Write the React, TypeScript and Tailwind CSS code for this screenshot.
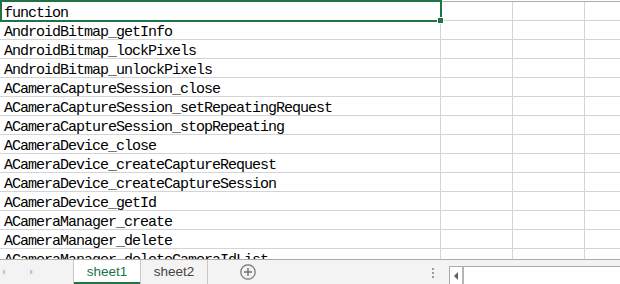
const rows = [
  'function',
  'AndroidBitmap_getInfo',
  'AndroidBitmap_lockPixels',
  'AndroidBitmap_unlockPixels',
  'ACameraCaptureSession_close',
  'ACameraCaptureSession_setRepeatingRequest',
  'ACameraCaptureSession_stopRepeating',
  'ACameraDevice_close',
  'ACameraDevice_createCaptureRequest',
  'ACameraDevice_createCaptureSession',
  'ACameraDevice_getId',
  'ACameraManager_create',
  'ACameraManager_delete',
  'ACameraManager_deleteCameraIdList',
];

function PlusIcon() {
  return (
    <svg width="16" height="16" viewBox="0 0 16 16" fill="none">
      <circle cx="8" cy="8" r="7.2" stroke="#707070" strokeWidth="1.2" />
      <path d="M8 4v8M4 8h8" stroke="#707070" strokeWidth="1.4" />
    </svg>
  );
}

export default function App() {
  return (
    <div className="relative w-[620px] h-[284px] overflow-hidden bg-white flex flex-col">
      {/* grid */}
      <div className="relative h-[259px] overflow-hidden shrink-0">
        <div className="h-px bg-white"></div>
        <div className="h-px bg-[#ababab]"></div>
        {rows.map((r) => (
          <div key={r} className="flex h-[19px] border-b border-[#d4d4d4]">
            <div className="w-[441px] shrink-0 border-r border-[#d4d4d4] pl-[4px] pt-[5px] whitespace-nowrap">
              <span className="block text-black text-[15px] leading-[13px] tracking-[-1px] font-['Liberation_Mono',monospace]">
                {r}
              </span>
            </div>
            <div className="w-[72px] shrink-0 border-r border-[#d4d4d4]"></div>
            <div className="w-[72px] shrink-0 border-r border-[#d4d4d4]"></div>
            <div className="w-[72px] shrink-0 border-r border-[#d4d4d4]"></div>
          </div>
        ))}
        {/* selection */}
        <div className="absolute left-0 top-0 w-[442px] h-[22px] border-2 border-[#217346]"></div>
        <div className="absolute left-[437px] top-[17px] w-[7px] h-[7px] bg-[#217346] border border-white"></div>
      </div>

      {/* sheet tabs bar */}
      <div className="flex h-[25px] shrink-0 border-t border-[#ababab] bg-[#f3f3f3] font-['Liberation_Sans',Arial,sans-serif]">
        <div className="w-[73px] shrink-0 flex items-center">
          <div className="ml-[2px] w-0 h-0 border-y-[3px] border-y-transparent border-r-[3px] border-r-[#c4c4c4]"></div>
          <div className="ml-[25px] w-0 h-0 border-y-[3px] border-y-transparent border-l-[3px] border-l-[#c4c4c4]"></div>
        </div>
        <div className="w-[68px] shrink-0 bg-white border-x border-[#c8c8c8] flex flex-col">
          <div className="flex-1 flex items-center justify-center pt-[1px] text-[13.5px] leading-[16px] text-[#217346]">sheet1</div>
          <div className="h-[2px] bg-[#217346]"></div>
        </div>
        <div className="w-[67px] shrink-0 border-r border-[#c8c8c8] flex items-center justify-center text-[13.5px] leading-[16px] text-[#444]">
          sheet2
        </div>
        <div className="ml-[32px] w-[16px] shrink-0 flex items-center">
          <PlusIcon />
        </div>
        <div className="w-[176px] shrink-0"></div>
        <div className="w-[2px] shrink-0 flex flex-col gap-[2px] pt-[8px]">
          <div className="w-[2px] h-[2px] bg-[#9a9a9a]"></div>
          <div className="w-[2px] h-[2px] bg-[#9a9a9a]"></div>
          <div className="w-[2px] h-[2px] bg-[#9a9a9a]"></div>
        </div>
        <div className="w-[15px] shrink-0"></div>
        <div className="mt-[6px] w-[180px] h-[19px] shrink-0 bg-white border border-[#ababab] flex">
          <div className="w-[12px] flex items-center justify-center">
            <div className="w-0 h-0 border-y-[4px] border-y-transparent border-r-[4px] border-r-[#606060]"></div>
          </div>
          <div className="w-[2px] bg-[#b4b4b4]"></div>
        </div>
      </div>
    </div>
  );
}
